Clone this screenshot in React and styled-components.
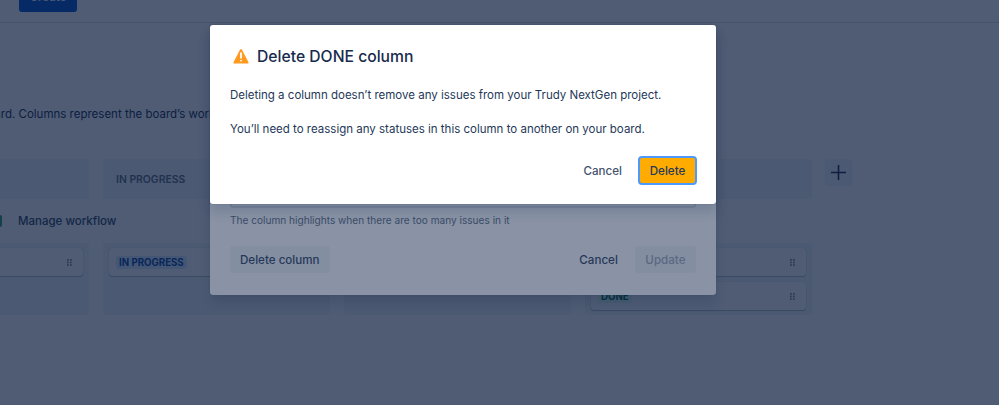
import React from "react";
import styled, { createGlobalStyle } from "styled-components";

const Global = createGlobalStyle`
  html, body { margin: 0; padding: 0; background: #fff; }
  body { font-family: Inter, "Noto Sans", sans-serif; color: #172B4D; -webkit-font-smoothing: antialiased; }
`;
const Page = styled.div`
  position: relative; width: 999px; height: 405px; overflow: hidden; background: #fff;
`;
const Header = styled.header`
  height: 22px; border-bottom: 1px solid #dfe1e6; padding-left: 19px; display: flex; align-items: flex-end; overflow: hidden;
`;
const CreateButton = styled.button`
  width: 58px; height: 32px; margin-bottom: 10px; border: 0; border-radius: 3px; background: #0052CC; color: #fff;
  font: 500 11.5px Inter, sans-serif; display: flex; align-items: flex-end; justify-content: center; padding: 0 0 8px;
`;
const Content = styled.main`
  margin-left: -138px; display: flex; flex-direction: column;
`;
const Description = styled.p`
  margin: 81px 0 0 -52px; height: 20px; line-height: 20px; font-size: 11.5px; white-space: nowrap; color: #172B4D;
`;
const HeaderRow = styled.div`
  margin-top: 35px; display: flex; gap: 14px; align-items: flex-start;
`;
const ColumnHead = styled.div`
  width: 227px; height: 40px; box-sizing: border-box; padding: 0 13px; background: #f5f6f8; border-radius: 3px;
  display: flex; align-items: center; font-size: 10.4px; font-weight: 600; color: #5E6C84;
`;
const AddButton = styled.button`
  width: 27px; height: 27px; border: 0; padding: 0; margin-left: -1px; background: #f5f6f8; border-radius: 3px; color: #172B4D;
  display: flex; align-items: center; justify-content: center;
`;
const WorkflowRow = styled.div`
  margin-top: 12px; height: 20px; display: flex; align-items: center; padding-left: 156px;
  font-size: 11.5px; font-weight: 500; color: #344563;
`;
const Lozenge = styled.span`
  width: 8px; height: 12px; margin-left: -24px; margin-right: 16px; background: #2FA36B; border-radius: 2px;
`;
const BodyRow = styled.div`
  margin-top: 12px; display: flex; gap: 14px;
`;
const Column = styled.div`
  width: 227px; height: 72px; box-sizing: border-box; padding: 5px 6px; background: #f5f6f8; border-radius: 3px;
  display: flex; flex-direction: column; gap: 6px;
`;
const Card = styled.div`
  height: 28px; box-sizing: border-box; background: #fff; border-radius: 3px; box-shadow: 0 1px 1px rgba(9,30,66,.25), 0 0 1px rgba(9,30,66,.31);
  padding: 0 11px 0 7px; display: flex; align-items: center; justify-content: space-between;
`;
const Tag = styled.span`
  height: 13px; line-height: 13px; padding: 0 3px; border-radius: 3px; font-size: 9.7px; font-weight: 700;
  background: ${p => p.$bg}; color: ${p => p.$fg};
`;
const Blanket = styled.div`
  position: absolute; inset: 0; background: ${p => p.$color};
`;
const Modal = styled.section`
  position: absolute; left: 210px; top: 25px; width: 506px; box-sizing: border-box; background: #fff; border-radius: 3px;
  box-shadow: 0 0 1px rgba(9,30,66,.3), 0 8px 12px rgba(9,30,66,.15);
`;
const BackModal = styled(Modal)`
  height: 270px; padding: 0 20px 22px; display: flex; flex-direction: column; justify-content: flex-end;
`;
const FrontModal = styled(Modal)`
  height: 179px; padding: 20px 19px 19px 20px; display: flex; flex-direction: column;
`;
const Input = styled.div`
  height: 30px; border: 2px solid #dfe1e6; border-radius: 3px; box-sizing: border-box; background: #fafbfc;
`;
const Help = styled.p`
  margin: 5px 0 0; line-height: 14px; font-size: 10.1px; color: #6B778C;
`;
const BackFooter = styled.footer`
  margin-top: 19px; display: flex; align-items: center; justify-content: space-between;
`;
const Group = styled.div`
  display: flex; align-items: center; gap: ${p => p.$gap || 0}px;
`;
const Btn = styled.button`
  height: 27px; border: 0; border-radius: 3px; padding: 0 ${p => p.$px || 11}px; white-space: nowrap;
  background: ${p => p.$bg || "transparent"}; color: ${p => p.$fg || "#42526E"};
  font: 500 11.6px Inter, sans-serif;
`;
const TitleRow = styled.div`
  display: flex; align-items: center; gap: 5px; height: 22px;
`;
const Title = styled.h2`
  margin: 0; font-size: 15.7px; font-weight: 500; color: #172B4D; white-space: nowrap;
`;
const Para = styled.p`
  margin: ${p => p.$mt}px 0 0; line-height: 20px; font-size: 11.5px; color: #253858; white-space: nowrap;
`;
const FrontFooter = styled.footer`
  margin-top: auto; display: flex; justify-content: flex-end; align-items: center; gap: 5px;
`;
const DeleteBtn = styled(Btn)`
  width: 59px; height: 29px; padding: 0; background: #FFAB00; color: #253858; border: 2px solid #4C9AFF; box-sizing: border-box; border-radius: 4px;
`;

const Grip = () => (
  <svg width="5" height="7" viewBox="0 0 5 7" fill="#7A869A" aria-hidden="true">
    {[0, 2.6, 5.2].map(y => [0, 3].map(x => <rect key={`${x}-${y}`} x={x} y={y} width="1.7" height="1.7" />))}
  </svg>
);
const Warn = () => (
  <svg width="22" height="22" viewBox="0 0 24 24" aria-hidden="true">
    <path fill="#FF991F" d="M12.938 4.967c-.518-.978-1.36-.974-1.876 0L3.938 18.425c-.518.978-.045 1.771 1.057 1.771h14.01c1.102 0 1.573-.797 1.057-1.771L12.938 4.967z" />
    <path fill="#fff" d="M12 15a1 1 0 0 1-1-1V9a1 1 0 0 1 2 0v5a1 1 0 0 1-1 1m0 3a1 1 0 1 1 0-2 1 1 0 0 1 0 2" />
  </svg>
);
const Plus = () => (
  <svg width="17" height="17" viewBox="0 0 17 17" aria-hidden="true">
    <path d="M8.5 1v15M1 8.5h15" stroke="currentColor" strokeWidth="1.6" fill="none" />
  </svg>
);

export default function App() {
  return (
    <Page>
      <Global />
      <Header><CreateButton>Create</CreateButton></Header>
      <Content>
        <Description>Use columns to configure your board. Columns represent the board’s workflow and the statuses of issues.</Description>
        <HeaderRow>
          <ColumnHead>TO DO</ColumnHead>
          <ColumnHead>IN PROGRESS</ColumnHead>
          <ColumnHead />
          <ColumnHead>DONE</ColumnHead>
          <AddButton aria-label="Add column"><Plus /></AddButton>
        </HeaderRow>
        <WorkflowRow><Lozenge />Manage workflow</WorkflowRow>
        <BodyRow>
          <Column><Card><Tag $bg="#DFE1E6" $fg="#42526E">TO DO</Tag><Grip /></Card></Column>
          <Column><Card><Tag $bg="#DEEBFF" $fg="#0747A6">IN PROGRESS</Tag><Grip /></Card></Column>
          <Column />
          <Column>
            <Card><Tag $bg="#E3FCEF" $fg="#006644">DONE</Tag><Grip /></Card>
            <Card><Tag $bg="#E3FCEF" $fg="#006644">DONE</Tag><Grip /></Card>
          </Column>
        </BodyRow>
      </Content>
      <Blanket $color="rgba(9,22,46,.45)" />
      <BackModal>
        <Input />
        <Help>The column highlights when there are too many issues in it</Help>
        <BackFooter>
          <Btn $bg="rgba(9,30,66,.04)" $px={10}>Delete column</Btn>
          <Group $gap={6}>
            <Btn>Cancel</Btn>
            <Btn $bg="rgba(9,30,66,.04)" $fg="#A5ADBA" $px={10.5}>Update</Btn>
          </Group>
        </BackFooter>
      </BackModal>
      <Blanket $color="rgba(9,30,66,.48)" />
      <FrontModal>
        <TitleRow><Warn /><Title>Delete DONE column</Title></TitleRow>
        <Para $mt={18}>Deleting a column doesn’t remove any issues from your Trudy NextGen project.</Para>
        <Para $mt={14}>You’ll need to reassign any statuses in this column to another on your board.</Para>
        <FrontFooter>
          <Btn $px={11}>Cancel</Btn>
          <DeleteBtn>Delete</DeleteBtn>
        </FrontFooter>
      </FrontModal>
    </Page>
  );
}
